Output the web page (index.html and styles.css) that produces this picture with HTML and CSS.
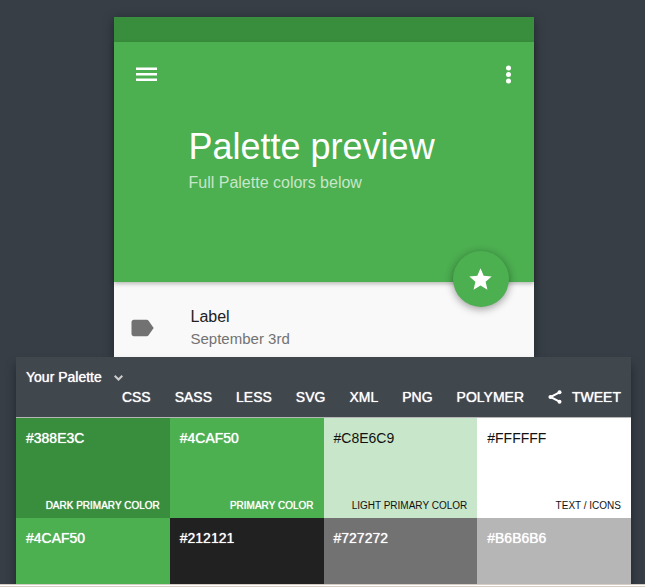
FILE: index.html
```html
<!DOCTYPE html>
<html lang="en">
<head>
<meta charset="utf-8">
<meta name="viewport" content="width=device-width, initial-scale=1">
<title>Palette preview</title>
<link rel="stylesheet" href="styles.css">
</head>
<body>
<main class="stage">
  <section class="preview">
    <div class="status"></div>
    <header class="hero">
      <div class="toolbar">
        <button class="icon-button" type="button" aria-label="Menu">
          <svg width="27" height="27" viewBox="0 0 27 27"><path d="M3 6.500h21v2.500H3zM3 12h21v2.500H3zM3 17.500h21V20H3z"/></svg>
        </button>
        <button class="icon-button" type="button" aria-label="More">
          <svg width="27" height="27" viewBox="0 0 27 27"><circle cx="13.500" cy="7" r="2.500"/><circle cx="13.500" cy="13.500" r="2.500"/><circle cx="13.500" cy="20" r="2.500"/></svg>
        </button>
      </div>
      <div class="heading">
        <h1>Palette preview</h1>
        <p>Full Palette colors below</p>
      </div>
      <button class="fab" type="button" aria-label="Favorite">
        <svg width="27" height="27" viewBox="0 0 24 24"><path d="M12 17.27L18.18 21l-1.64-7.03L22 9.24l-7.19-.61L12 2 9.19 8.63 2 9.24l5.46 4.73L5.82 21z"/></svg>
      </button>
    </header>
    <div class="item">
      <svg class="tag" width="28" height="28" viewBox="0 0 24 24"><path d="M17.63 5.84C17.27 5.33 16.67 5 16 5L5 5.01C3.9 5.01 3 5.9 3 7v10c0 1.1.9 1.99 2 1.99L16 19c.67 0 1.27-.33 1.63-.84L22 12l-4.370-6.160z"/></svg>
      <div>
        <p class="item-title">Label</p>
        <p class="item-date">September 3rd</p>
      </div>
    </div>
  </section>
  <section class="palette">
    <header class="palette-bar">
      <button class="palette-name" type="button">Your Palette
        <svg width="9" height="7" viewBox="0 0 9 7"><path d="M0.700 1.700L4.500 5.500L8.300 1.700"/></svg>
      </button>
      <nav class="exports">
        <a href="#css">CSS</a>
        <a href="#sass">SASS</a>
        <a href="#less">LESS</a>
        <a href="#svg">SVG</a>
        <a href="#xml">XML</a>
        <a href="#png">PNG</a>
        <a href="#polymer">POLYMER</a>
        <a class="tweet" href="#tweet"><svg width="14" height="14" viewBox="0 0 14 14"><path d="M11.500 2.300L2.500 7l9 4.700"/><circle cx="11.500" cy="2.300" r="2"/><circle cx="2.500" cy="7" r="2"/><circle cx="11.500" cy="11.700" r="2"/></svg>TWEET</a>
      </nav>
    </header>
    <div class="swatches">
      <div class="swatch dark-primary"><span>#388E3C</span><small>DARK PRIMARY COLOR</small></div>
      <div class="swatch primary"><span>#4CAF50</span><small>PRIMARY COLOR</small></div>
      <div class="swatch light-primary"><span>#C8E6C9</span><small>LIGHT PRIMARY COLOR</small></div>
      <div class="swatch icons"><span>#FFFFFF</span><small>TEXT / ICONS</small></div>
      <div class="swatch primary"><span>#4CAF50</span></div>
      <div class="swatch primary-text"><span>#212121</span></div>
      <div class="swatch secondary-text"><span>#727272</span></div>
      <div class="swatch divider"><span>#B6B6B6</span></div>
    </div>
  </section>
</main>
<footer class="edge"></footer>
</body>
</html>
```
FILE: styles.css
```css
* {
  box-sizing: border-box;
}

body {
  display: flex;
  flex-direction: column;
  height: 100vh;
  margin: 0;
  overflow: hidden;
  background: #373e46;
  color: #fff;
  font-family: "Liberation Sans", Arial, sans-serif;
  font-size: 14px;
}

h1,
p {
  margin: 0;
  font-weight: 400;
}

button {
  padding: 0;
  border: 0;
  background: none;
  color: inherit;
  font: inherit;
  cursor: pointer;
}

svg {
  display: block;
  fill: currentColor;
}

.stage {
  flex: 1;
  min-height: 0;
  overflow: hidden;
  padding: 17px 14px 0 16px;
}

.preview {
  max-width: 420px;
  margin: 0 auto;
  background: #f9f9f9;
  box-shadow: 0 2px 10px rgba(0, 0, 0, 0.4);
}

.status {
  height: 25px;
  background: #388e3c;
}

.hero {
  position: relative;
  height: 240px;
  padding: 19px 12px 0 19px;
  background: #4caf50;
  box-shadow: 0 2px 4px rgba(0, 0, 0, 0.25);
}

.toolbar {
  display: flex;
  justify-content: space-between;
}

.heading {
  padding: 37px 0 0 56px;
}

.heading h1 {
  font-size: 36px;
  line-height: 44px;
}

.heading p {
  font-size: 16px;
  line-height: 28px;
  color: #c8e6c9;
}

.fab {
  position: absolute;
  right: 25px;
  bottom: -25px;
  display: grid;
  place-items: center;
  width: 56px;
  height: 56px;
  border-radius: 50%;
  background: #4caf50;
  box-shadow: 0 2px 8px rgba(0, 0, 0, 0.4);
}

.item {
  display: flex;
  align-items: center;
  gap: 35px;
  height: 75px;
  padding: 16px 14px 0;
}

.tag {
  color: #727272;
}

.item-title {
  color: #212121;
  font-size: 16px;
  line-height: 22px;
}

.item-date {
  color: #727272;
  font-size: 15px;
  line-height: 22px;
}

.palette {
  position: relative;
  box-shadow: 0 8px 10px rgba(0, 0, 0, 0.4);
}

.palette-bar {
  display: flex;
  flex-direction: column;
  align-items: flex-start;
  padding: 10px;
  border-bottom: 1px solid #b6b6b6;
  background: #40474d;
}

.palette-name {
  display: flex;
  align-items: center;
  gap: 12px;
  line-height: 20px;
  text-shadow: 0 0 1px currentColor;
}

.palette-name svg {
  fill: none;
  stroke: #ccc;
  stroke-width: 2;
}

.exports {
  display: flex;
  flex-wrap: wrap;
  justify-content: flex-end;
  align-self: stretch;
  gap: 0 24px;
  line-height: 20px;
}

.exports a {
  color: #fff;
  text-decoration: none;
  text-shadow: 0 0 1px currentColor;
}

.exports .tweet {
  display: flex;
  align-items: center;
  gap: 10px;
}

.tweet path {
  fill: none;
  stroke: currentColor;
  stroke-width: 2;
}

.swatches {
  display: grid;
  grid-template-columns: repeat(4, 1fr);
}

.swatch {
  display: flex;
  flex-direction: column;
  justify-content: space-between;
  height: 100px;
  padding: 10px 10px 6px;
  line-height: 20px;
  text-shadow: 0 0 1px currentColor;
}

.swatch small {
  font-size: 10px;
  line-height: 12px;
  text-align: right;
}

.dark-primary {
  background: #388e3c;
}

.primary {
  background: #4caf50;
}

.light-primary {
  background: #c8e6c9;
}

.icons {
  background: #fff;
}

.light-primary,
.icons {
  color: #111;
  text-shadow: none;
}

.primary-text {
  background: #212121;
}

.secondary-text {
  background: #727272;
}

.divider {
  background: #b6b6b6;
}

.edge {
  height: 3px;
  border-top: 1px solid #d6cec5;
  border-bottom: 1px solid #d6cec5;
  background: #fff;
}
```
